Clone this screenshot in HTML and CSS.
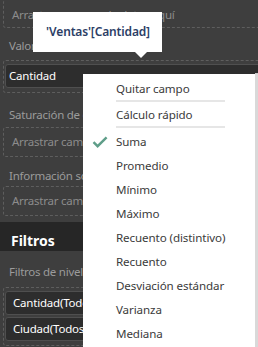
FILE: index.html
```html
<!DOCTYPE html>
<html lang="es">
<head>
<meta charset="utf-8">
<title>Campos</title>
<link rel="stylesheet" href="styles.css">
</head>
<body>
<div class="panel">
  <div class="drop drop-top">Arrastrar campos de datos aquí</div>
  <div class="label label-valores">Valores</div>
  <div class="well">
    <div class="field field-val">Cantidad</div>
  </div>
  <div class="label label-sat">Saturación de color</div>
  <div class="drop">Arrastrar campos de datos aquí</div>
  <div class="label label-info">Información sobre herramientas</div>
  <div class="drop">Arrastrar campos de datos aquí</div>
  <div class="section-head">Filtros</div>
  <div class="label label-filt">Filtros de nivel de objeto visual</div>
  <div class="well well-filters">
    <div class="field">Cantidad(Todos)</div>
    <div class="field">Ciudad(Todos)</div>
  </div>
</div>

<div class="tooltip">'Ventas'[Cantidad]</div>

<div class="menu">
  <div class="item item-top">Quitar campo</div>
  <div class="sep"></div>
  <div class="item item-top">Cálculo rápido</div>
  <div class="sep"></div>
  <div class="item checked">
    <svg class="check" width="16" height="12" viewBox="0 0 16 12"><path d="M1.5 6.2 L5.6 10.2 L14.6 1.3" fill="none" stroke="#5f9e89" stroke-width="2.4"/></svg>
    Suma
  </div>
  <div class="item">Promedio</div>
  <div class="item">Mínimo</div>
  <div class="item">Máximo</div>
  <div class="item">Recuento (distintivo)</div>
  <div class="item">Recuento</div>
  <div class="item">Desviación estándar</div>
  <div class="item">Varianza</div>
  <div class="item">Mediana</div>
</div>
</body>
</html>
```
FILE: styles.css
```css
* { box-sizing: border-box; }
html, body {
  margin: 0;
  width: 258px;
  height: 347px;
  overflow: hidden;
  background: #3e3e3e;
  font-family: "Noto Sans", "Open Sans", sans-serif;
  font-size: 11.5px;
}
.panel {
  width: 330px;
  padding-left: 3px;
  display: flex;
  flex-direction: column;
}
.drop {
  border: 1px dashed #5e5e5e;
  border-radius: 3px;
  height: 30px;
  line-height: 28px;
  padding-left: 8px;
  color: #8c8c8c;
  white-space: nowrap;
  letter-spacing: -0.25px;
}
.drop-top {
  height: 28px;
  line-height: 16px;
  border-top: none;
  padding-top: 7px;
}
.label {
  color: #9b9b9b;
  line-height: 16px;
  padding-left: 6px;
  white-space: nowrap;
  letter-spacing: -0.25px;
}
.label-valores { padding-top: 10px; padding-bottom: 6px; }
.label-sat { padding-top: 14px; padding-bottom: 4px; }
.label-info { padding-top: 11px; padding-bottom: 2px; }
.label-filt { padding-top: 13px; padding-bottom: 7px; }
.well {
  border: 1px dashed #5e5e5e;
  border-radius: 3px;
  padding: 3px 3px 4px 1px;
  display: flex;
  flex-direction: column;
  gap: 2px;
}
.field {
  height: 24px;
  line-height: 22px;
  border: 1px solid #4f4f4f;
  border-radius: 3px;
  background: #2d2d2d;
  color: #ffffff;
  padding-left: 7px;
  font-size: 11.5px;
  white-space: nowrap;
  letter-spacing: -0.2px;
}
.field-val { padding-left: 3px; }
.well-filters { padding-top: 3px; }
.section-head {
  margin-top: 6px;
  margin-left: -3px;
  height: 29px;
  line-height: 29px;
  padding-left: 11px;
  padding-top: 4px;
  background: #262626;
  color: #ffffff;
  font-weight: 700;
  font-size: 14px;
}
.tooltip {
  position: absolute;
  left: 33px;
  top: 12px;
  width: 129px;
  height: 40px;
  background: #ffffff;
  color: #2c3e66;
  font-weight: 600;
  font-size: 12px;
  line-height: 40px;
  padding-left: 13px;
  white-space: nowrap;
  letter-spacing: -0.15px;
}
.tooltip::after {
  content: "";
  position: absolute;
  left: 102px;
  top: 40px;
  border-left: 6px solid transparent;
  border-right: 6px solid transparent;
  border-top: 6px solid #ffffff;
}
.menu {
  position: absolute;
  left: 83px;
  top: 74px;
  width: 175px;
  height: 280px;
  background: #ffffff;
  border-right: 3px solid #d9d9d9;
  padding-top: 4px;
  color: #3b3b3b;
  font-size: 11.6px;
  letter-spacing: -0.1px;
  display: flex;
  flex-direction: column;
}
.menu::before {
  content: "";
  position: absolute;
  right: -3px;
  top: -1px;
  width: 3px;
  height: 1px;
  background: #c9c9c9;
}
.item {
  position: relative;
  height: 24px;
  line-height: 24px;
  padding-left: 33px;
  white-space: nowrap;
}
.item-top {
  height: 22px;
  line-height: 22px;
}
.sep {
  height: 2px;
  margin: 0 30px 2px 33px;
  background: #e6e6e6;
}
.check {
  position: absolute;
  left: 9px;
  top: 6px;
}
```
